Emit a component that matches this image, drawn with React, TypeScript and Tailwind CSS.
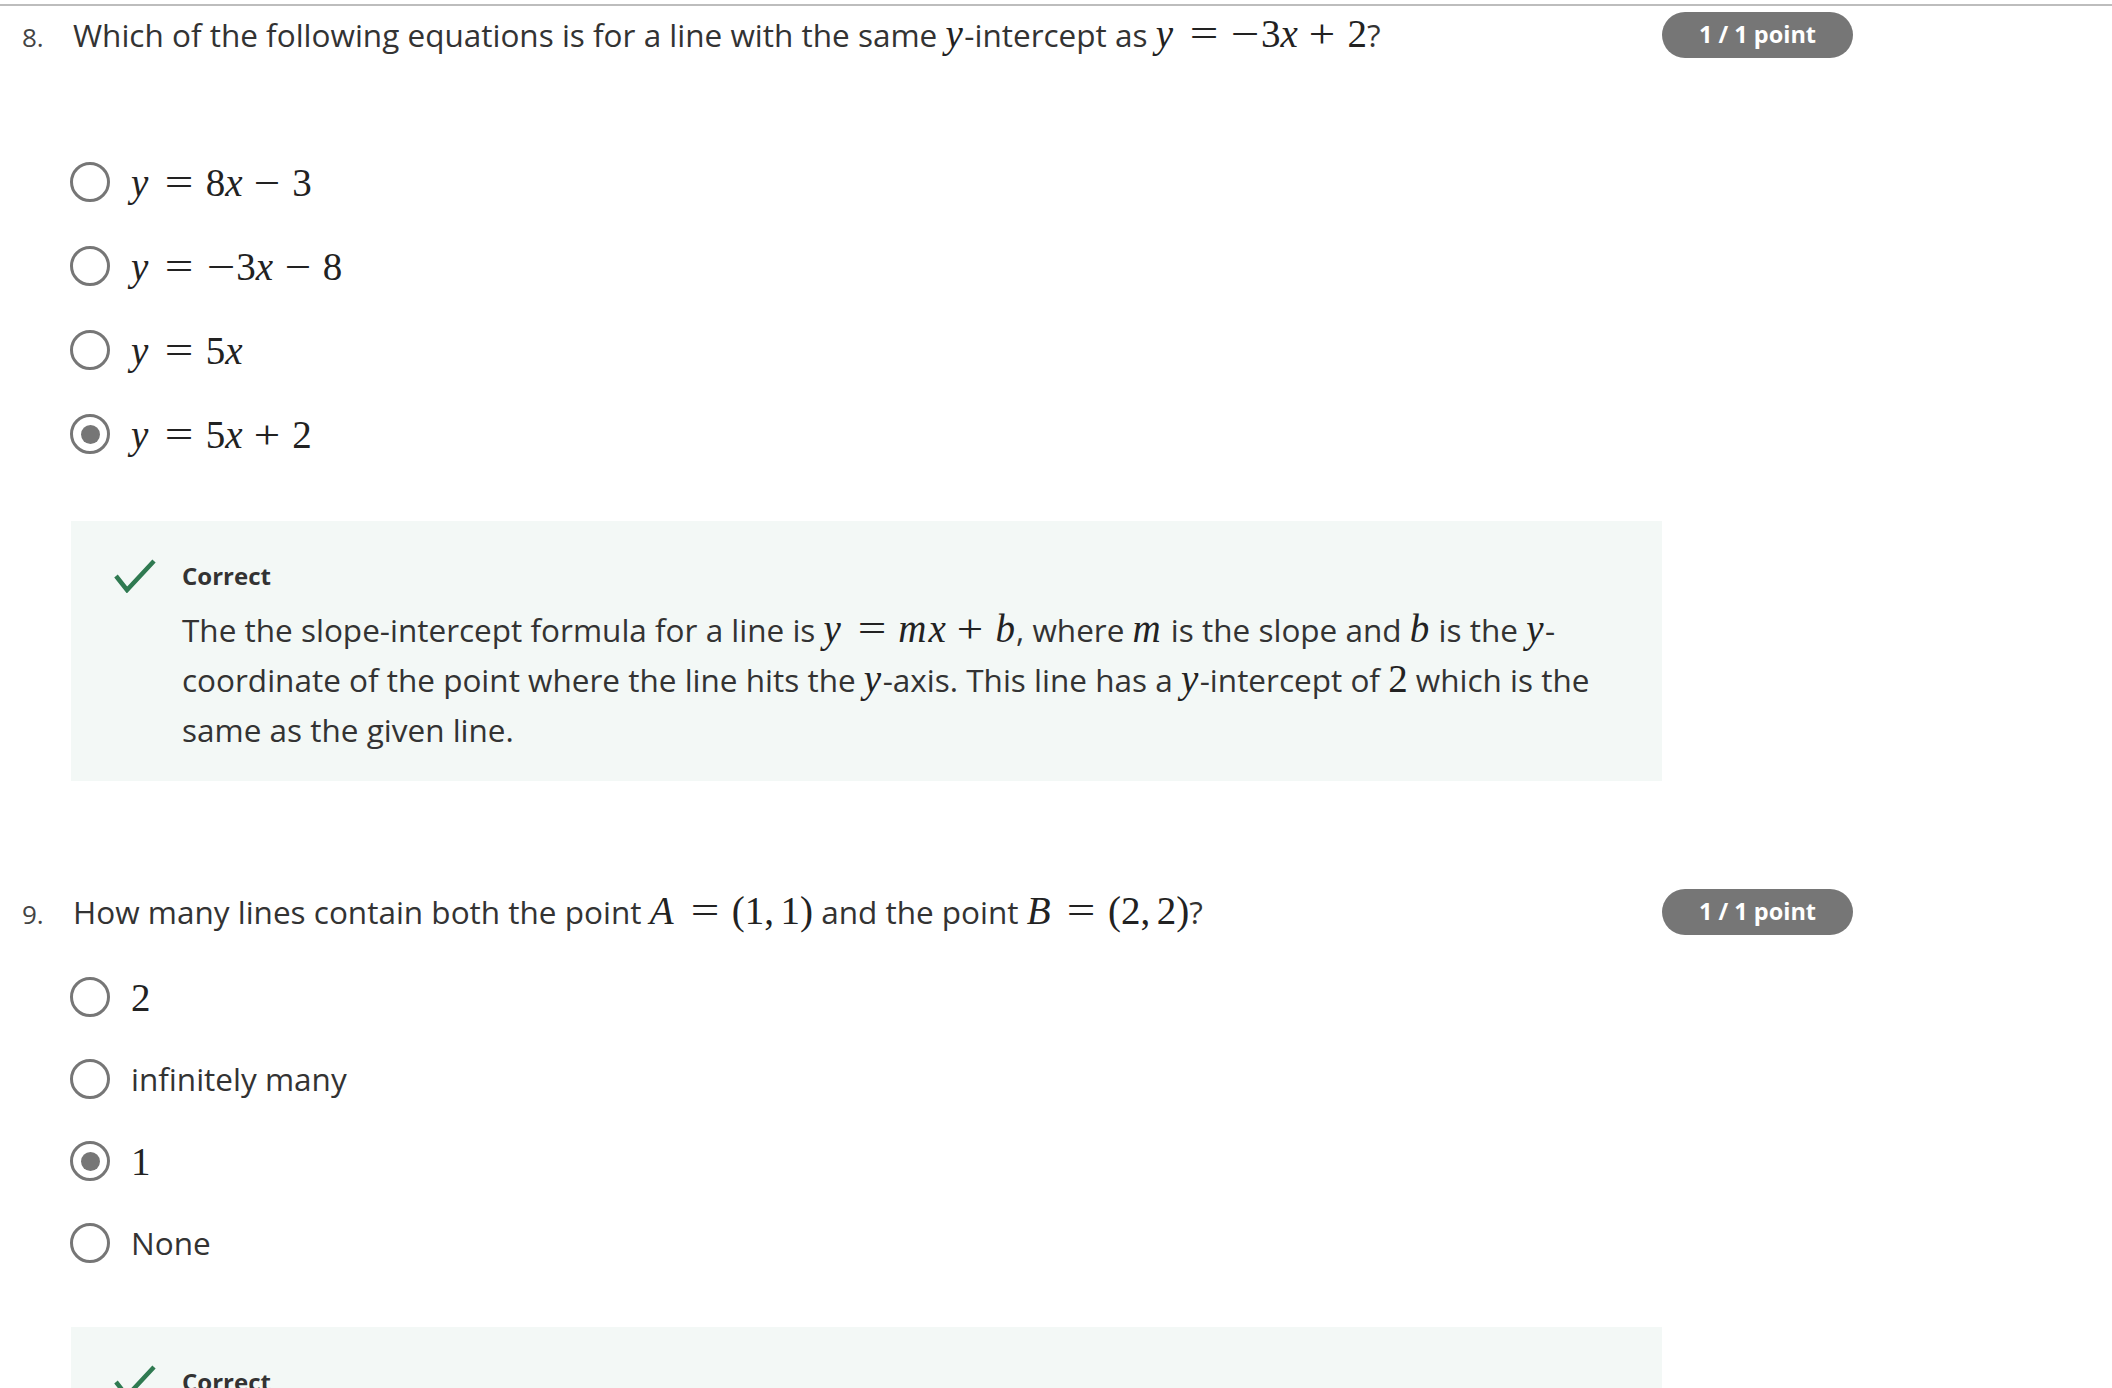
import React from "react";

const MF = "font-['Liberation_Serif',serif]";

function M({ children }: { children: React.ReactNode }) {
  return (
    <span className={`${MF} text-[39px] leading-none text-[#222] whitespace-nowrap`}>{children}</span>
  );
}
function V({ c, pr = "pr-[0.05em]" }: { c: string; pr?: string }) {
  return <i className={`italic ${pr}`}>{c}</i>;
}
function Rel({ c }: { c: string }) {
  return <span className="inline-block ml-[0.47em] mr-[0.4em] scale-x-[1.3]">{c}</span>;
}
function Bin({ c }: { c: string }) {
  return <span className="inline-block ml-[0.3em] mr-[0.36em] scale-x-[1.2]">{c}</span>;
}
function Neg() {
  return <span className="inline-block ml-[0.1em] mr-[0.12em] scale-x-[1.3]">−</span>;
}

function Radio({ checked }: { checked?: boolean }) {
  return (
    <span className="w-[40px] h-[40px] shrink-0 rounded-full border-[3.5px] border-[#767676] flex items-center justify-center">
      {checked && <span className="w-[19px] h-[19px] rounded-full bg-[#767676]" />}
    </span>
  );
}

function Option({ checked, h, children }: { checked?: boolean; h: string; children: React.ReactNode }) {
  return (
    <div className={`flex items-center gap-[21px] ${h}`}>
      <Radio checked={checked} />
      <div className="text-[31.5px] text-[#333] leading-none">{children}</div>
    </div>
  );
}

function Badge() {
  return (
    <div className="w-[191px] h-[46px] shrink-0 rounded-full bg-[#767676] text-white font-bold text-[23.5px] flex items-center justify-center">
      1 / 1 point
    </div>
  );
}

function QuestionRow({ n, children }: { n: string; children: React.ReactNode }) {
  return (
    <div className="flex items-center w-[1853px] h-[46px]">
      <div className="w-[1662px] flex items-baseline">
        <span className="w-[73px] pl-[22px] text-[26px] text-[#444] shrink-0">{n}</span>
        <span className="text-[31.5px] text-[#333] leading-[46px]">{children}</span>
      </div>
      <Badge />
    </div>
  );
}

function Check() {
  return (
    <svg width="42" height="34" viewBox="0 0 42 34" className="shrink-0">
      <polyline points="2,17 13,31 40,2" fill="none" stroke="#2f7a51" strokeWidth="4.5" strokeLinecap="butt" strokeLinejoin="miter" />
    </svg>
  );
}

function Feedback({ children }: { children?: React.ReactNode }) {
  return (
    <div className="ml-[71px] w-[1591px] bg-[#f3f8f6] pt-[38px] pb-[26px] pl-[43px] flex gap-[26px]">
      <Check />
      <div className="flex flex-col">
        <div className="h-[34px] flex items-center text-[24px] font-bold text-[#333]">Correct</div>
        <div className="mt-[12px] text-[31.5px] leading-[50px] text-[#333]">{children}</div>
      </div>
    </div>
  );
}

const X = () => <V c="x" pr="pr-[0.05em]" />;
const Y = () => <V c="y" pr="pr-[0.04em]" />;
const Mv = () => <V c="m" pr="pr-[0.05em]" />;
const Bv = () => <V c="b" pr="pr-[0.03em]" />;

export default function App() {
  return (
    <div className="w-[2112px] h-[1388px] overflow-hidden bg-white font-['Open_Sans',sans-serif]">
      <div className="mt-[4px] h-[2px] bg-[#bdbdbd]" />
      <div className="mt-[6px]">
        <QuestionRow n="8.">
          Which of the following equations is for a line with the same <M><Y /></M>-intercept as{" "}
          <M>
            <Y />
            <Rel c="=" />
            <Neg />3<X />
            <Bin c="+" />2
          </M>
          ?
        </QuestionRow>
      </div>

      <div className="mt-[82px] pl-[70px] flex flex-col">
        <Option h="h-[84px]">
          <M>
            <Y />
            <Rel c="=" />8<X />
            <Bin c="−" />3
          </M>
        </Option>
        <Option h="h-[84px]">
          <M>
            <Y />
            <Rel c="=" />
            <Neg />3<X />
            <Bin c="−" />8
          </M>
        </Option>
        <Option h="h-[84px]">
          <M>
            <Y />
            <Rel c="=" />5<X />
          </M>
        </Option>
        <Option h="h-[84px]" checked>
          <M>
            <Y />
            <Rel c="=" />5<X />
            <Bin c="+" />2
          </M>
        </Option>
      </div>

      <div className="mt-[45px]">
        <Feedback>
          <div className="whitespace-nowrap">
            The the slope-intercept formula for a line is{" "}
            <M>
              <Y />
              <Rel c="=" />
              <Mv />
              <X />
              <Bin c="+" />
              <Bv />
            </M>
            , where <M><Mv /></M> is the slope and <M><Bv /></M> is the <M><Y /></M>-
          </div>
          <div className="whitespace-nowrap">
            coordinate of the point where the line hits the <M><Y /></M>-axis. This line has a{" "}
            <M><Y /></M>-intercept of <M>2</M> which is the
          </div>
          <div className="whitespace-nowrap">same as the given line.</div>
        </Feedback>
      </div>

      <div className="mt-[108px]">
        <QuestionRow n="9.">
          How many lines contain both the point{" "}
          <M>
            <V c="A" pr="pr-[0.06em]" />
            <Rel c="=" />
            (1,<span className="ml-[0.167em]">1</span>)
          </M>{" "}
          and the point{" "}
          <M>
            <V c="B" pr="pr-[0.04em]" />
            <Rel c="=" />
            (2,<span className="ml-[0.167em]">2</span>)
          </M>
          ?
        </QuestionRow>
      </div>

      <div className="mt-[21px] pl-[70px] flex flex-col">
        <Option h="h-[82px]">
          <M>2</M>
        </Option>
        <Option h="h-[82px]">infinitely many</Option>
        <Option h="h-[82px]" checked>
          <M>1</M>
        </Option>
        <Option h="h-[82px]">None</Option>
      </div>

      <div className="mt-[43px]">
        <Feedback>
          <div className="whitespace-nowrap">Two points determine a unique line.</div>
        </Feedback>
      </div>
    </div>
  );
}
